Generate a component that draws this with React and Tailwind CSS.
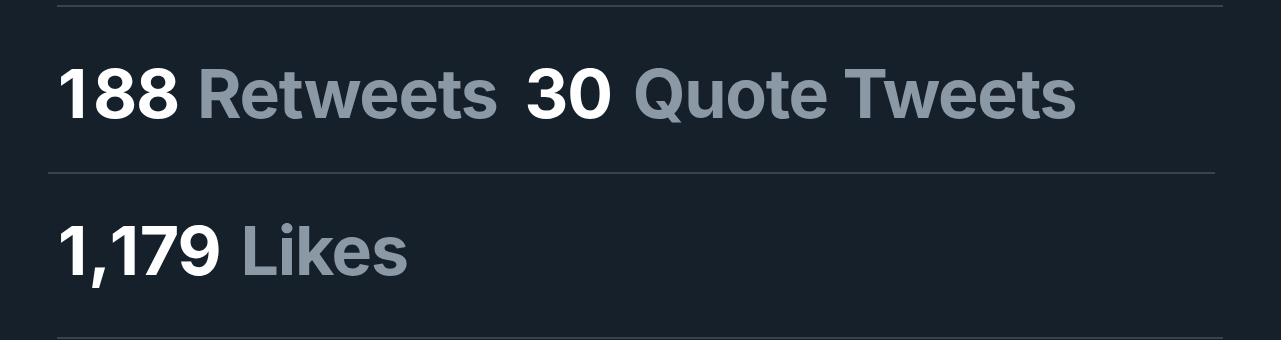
export default function App() {
  const font = { fontFamily: "Inter, 'Noto Sans', sans-serif" };
  return (
    <div className="w-[1281px] h-[340px] bg-[#15202b] pt-[5px] overflow-hidden" style={font}>
      <div className="ml-[57px] mr-[58px] border-t-2 border-[#38444d] h-[167px] flex items-center pt-[7px] pl-[1px] text-[68px] font-bold tracking-[-1.3px] leading-none">
        <span className="text-white">
          <span className="inline-block mr-[7px]">1</span>88
        </span>
        <span className="text-[#8b98a5] ml-[18px]">Retweets</span>
        <span className="text-white ml-[27px]">30</span>
        <span className="text-[#8b98a5] ml-[21px]">Quote Tweets</span>
      </div>
      <div className="ml-[48px] mr-[66px] border-t-2 border-[#38444d] h-[165px] flex items-center pb-[12px] pl-[10px] text-[68px] font-bold tracking-[-1.2px] leading-none">
        <span className="text-white">
          <span className="inline-block mr-[2px]">1</span>,<span className="inline-block mr-[2px]">1</span>79
        </span>
        <span className="text-[#8b98a5] ml-[20px]">Likes</span>
      </div>
      <div className="ml-[57px] mr-[58px] border-t-2 border-[#38444d]"></div>
    </div>
  );
}
